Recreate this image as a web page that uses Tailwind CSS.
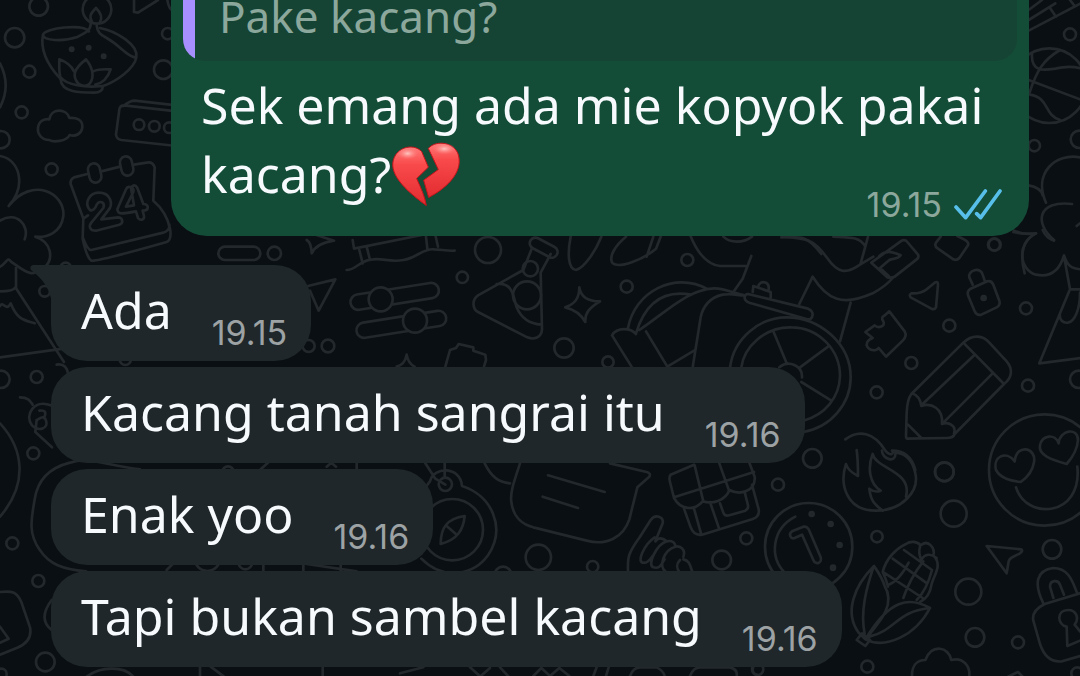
<!DOCTYPE html>
<html lang="id">
<head>
  <meta charset="UTF-8" />
  <meta name="viewport" content="width=device-width, initial-scale=1.0" />
  <title>Chat</title>
  <script src="https://cdn.jsdelivr.net/npm/@tailwindcss/browser@4"></script>
</head>
<body class="bg-[#0a0f13]">
  <div class="relative min-h-screen overflow-hidden font-['Noto_Sans',sans-serif] text-[50px] leading-[69px] text-[#f7fafc]">

    <!-- Wallpaper -->
    <svg class="absolute top-0 left-0 w-[1080px] h-[676px]" viewBox="0 0 3240 2028" fill="none" stroke="#22282c" stroke-width="8" stroke-linecap="round" stroke-linejoin="round" aria-hidden="true">
      <!-- lamp, cloud, box, calendar, flower -->
      <g>
        <circle cx="116" cy="19" r="28" /><circle cx="44" cy="113" r="29" /><circle cx="88" cy="215" r="18" />
        <circle cx="65" cy="337" r="18" /><circle cx="3" cy="419" r="26" /><circle cx="155" cy="508" r="18" />
        <circle cx="490" cy="209" r="28" /><circle cx="503" cy="101" r="17" /><circle cx="197" cy="805" r="17" />
        <circle cx="291" cy="28" r="43" />
        <path d="M288 24c-20 20-20 28-12 42M288 24c16 16 20 28 12 42M272 72c0 20-16 26-40 39-40 14-105 12-103-7 5-20 120-34 138-10M290 76c2 20 10 28 30 38 40 22 60 55 85 58M300 84c50 10 115 50 109 88-6 34-60 72-100 86M129 104c-10 50 15 92 52 132" />
        <path d="M182 236c-6-20-4-40-4-58 22 8 36 20 44 36M184 234c16 20 70 30 122 24M182 238c2 40 60 40 100 40 20 0 26-10 26-16M258 178c-36 28-44 50-22 74 14 8 26 6 34-2 14-20 8-48-12-72zM280 214c16-8 32-6 52-6-8 24-20 40-46 46" />
        <circle cx="215" cy="148" r="5" fill="#22282c" /><circle cx="266" cy="143" r="5" fill="#22282c" /><circle cx="311" cy="169" r="5" fill="#22282c" />
        <path d="M402 0v36l12 2 60-38M502 0q4 26 16 32M0 190q34 66 0 132" />
        <path d="M148 420c-28 0-36-24-34-36 2-22 20-28 34-26 4-34 52-34 60-4 20-2 40 4 39 27-2 20-20 30-38 24-10 20-50 22-61 15z" />
        <path d="M530 438l-166-18q-14-2-16-16l10-76q2-12 14-12l158 18M370 318q20-16 34-16l126 14" />
        <circle cx="417" cy="374" r="16" /><circle cx="463" cy="379" r="16" /><circle cx="508" cy="383" r="16" />
        <path d="M262 522l-40 10q-12 6-10 20l38 104-2 60q12 56 26 66 14 4 226-56 16-8 10-40-10-50-50-84l4-100q-6-18-24-14l-38 6M304 514l56-14M250 656l14-10M250 716q14 36 24 34l216-52q20-6 18-24" />
        <rect x="266" y="490" width="36" height="58" rx="18" transform="rotate(-12 284 519)" /><rect x="362" y="469" width="36" height="58" rx="18" transform="rotate(-12 380 498)" />
        <path d="M270 630c-20-22 0-52 26-52 36 0 46 34 28 54l-20 26 50-6c14 0 18 18 4 22l-70 18c-20 0-22-14-14-24l36-44c6-18-12-24-20-10-4 12-12 20-20 16zM378 568l-26 60c0 16 14 14 56 6l6 20c8 10 20 4 18-6l-4-16c20 0 20-20 2-20l-18-48c-8-14-20-6-18 6l8 46-24 4 22-44c4-14-16-22-22-8z" />
        <path d="M0 468c60 10 80 90 26 150 70-90 170-40 164 30-6 50-50 66-84 62 50 16 54 66 30 90-40 40-66 10-104-16-10-16-16 10-32 16M0 662c50-30 90 14 74 56" />
        <path d="M48 804v60M0 874q40 0 46-12l146 224M0 1072l190-26M0 918c10-18 18 20 32-8 20 50 40 50 72 60" />
        <rect x="655" y="740" width="126" height="40" rx="20" /><circle cx="823" cy="760" r="20" />
        <circle cx="134" cy="874" r="16" /><circle cx="3" cy="1138" r="26" /><circle cx="110" cy="1131" r="18" /><circle cx="100" cy="1360" r="18" />
        <path d="M170 1094c24-4 32 12 34 26M60 1192c24 0 30 10 38 22M152 1216c-50-20-80 30-56 60 20 20 50 10 42-14-4-16-14-10-24-4M118 1232q26-4 14 22M110 1260l-4 36 50 46M0 1270c70 76 86 180 0 280" />
        <path d="M450 1180l10-36M604 1180l-10-60" /><circle cx="376" cy="1078" r="17" />
      </g>
      <!-- bench, sliders, flask, sparkles -->
      <g transform="translate(900 690)">
        <path d="M20 30q14 8 15 40 14-30 66-38M40 12l62 20M24 168l82-20-50 94-26-60M158 30l4 26 248-50M178 60l10 40M200 50l10 40M378 20l4 36M406 14l8 36M140 120c30 0 40-32 80-32 30-4 50 10 90 2 40-6 60-36 92-32 20 0 40 6 62 4" />
        <circle cx="564" cy="60" r="39" /><circle cx="487" cy="142" r="17" /><circle cx="980" cy="170" r="18" /><circle cx="792" cy="354" r="29" />
        <circle cx="924" cy="396" r="17" /><circle cx="84" cy="348" r="19" /><circle cx="26" cy="348" r="18" />
        <rect x="150" y="176" width="268" height="46" rx="23" transform="rotate(-9 284 199)" fill="#0a0f13" /><circle cx="242" cy="208" r="36" fill="#0a0f13" />
        <rect x="168" y="260" width="272" height="46" rx="23" transform="rotate(-9 304 283)" fill="#0a0f13" /><circle cx="345" cy="272" r="36" fill="#0a0f13" />
        <path d="M696 54l-26 66-136 76c-20 14-16 42 0 50l148 76c20 8 42 2 44-24l-4-170 30-56M590 162c50-6 50 40 60 70 14 34 40 50 74 52" />
        <rect x="686" y="36" width="90" height="34" rx="17" transform="rotate(28 731 53)" /><circle cx="691" cy="116" r="23" /><circle cx="681" cy="196" r="42" />
        <path d="M838 172c4 26 20 42 62 42-30 18-46 34-44 62-12-22-28-36-60-44 28-10 42-26 42-60zM812 20c-10 50-8 98 16 100 26-6 60-60 76-100M978 20c-30 24-54 60-40 80 20 16 90-10 130-44l14-36M1060 20l-20 60" />
        <path d="M290 410q24-6 30-36 4 26 24 36M436 410l14-50 18-6 8-12 44 10v10l36 12 2 16-6 20" />
      </g>
      <!-- wheelbarrow, banner -->
      <g transform="translate(1800 690)">
        <circle cx="262" cy="90" r="18" />
        <path d="M270 14c20 50 50 90 90 94h76M454 78l-26 68-28 40M370 20c20 20 60 20 86 0M550 20c70 6 90 6 130 62 34 50 60 50 100 22l40-24M700 20c50 2 80 0 96 30l8-30M796 50l-14 50M598 222l40-82c44 70 90 90 180 50q40-22 60-46M752 218l-32 116" />
        <path d="M84 294c20-110 140-170 236-118M108 310c30-100 90-130 166-116M118 300c60-40 120-96 180-116 60-24 100 8 136 12M278 412l24-150c6-30 26-60 66-68 30-4 44 2 64 2M36 316c16-26 56-22 72-4M36 316l60 96M138 304l64 106 80-48" />
        <path d="M444 192l180 44q14 6 14 18-2 16-16 14l-174-50q-16-6-14-18 2-8 10-8zM458 186l2-18 52 18v18M474 172q4-20 24-14 10 6 8 20" />
        <path d="M390 414c10-90 90-152 170-152 100 0 192 80 192 180 0 80-60 150-142 164M424 412c8-60 70-122 150-120 80 0 146 66 146 146-2 64-44 116-110 134M520 304l40 96M600 412l84-62M604 456l90 56M538 412c28-24 70-4 68 30" />
      </g>
      <!-- letter, puzzle, padlock, pencil -->
      <g transform="translate(2460 690)">
        <path d="M154 98l88-64q12-8 20 2l32 38q4 8-4 14l-66 52q-12 4-22 2zM178 78c20-18 36-14 64-2-10 14-24 8-34 14l-28 24 26 24M362 20l-14 18q-6 10 6 18l46 32q10 4 18-4l26-38q4-10-12-18l-20-10" />
        <circle cx="522" cy="44" r="18" /><circle cx="618" cy="235" r="18" /><circle cx="388" cy="287" r="18" /><circle cx="274" cy="399" r="18" /><circle cx="170" cy="487" r="18" /><circle cx="624" cy="467" r="18" /><circle cx="776" cy="448" r="26" /><circle cx="373" cy="726" r="28" />
        <path d="M274 190c20 2 34-4 46-12l24-20q10-6 10 6l-6 68q-4 8-14 4l-62-34q-6-8 2-12z" />
        <path d="M458 164l-10-22c-6-20 34-34 40-8l6 18M452 176l50-22q12-4 18 10l18 48q4 14-8 20l-46 22q-14 4-20-10l-20-48q-4-12 8-20z" /><circle cx="491" cy="204" r="6" fill="#22282c" />
        <path d="M136 306l28-20c10 10 34 4 26-12-6-8-4-14 2-16l16-14 46 60q8 14-6 28l-50 48-22-26c-10 14-44 4-34-18 4-8 10-10 16-12z" />
        <path d="M430 338c30-28 60-20 78 0l52 56c20 24 16 50-8 68l-148 150q-4 12-24 12l-118 2q-4 0-4-8l2-70q2-40 14-56zM430 338l122 124M464 374l-160 152M518 430l-148 148M276 490q24 8 28 38c30-10 66 6 62 54 20-8 44 6 36 28M264 584l40 40" />
        <path d="M580 6q30 8 68 4c-60 30-50 110 0 124 40 8 70-10 84-58 10 30 20 40 50 42M668 0q10 24 34 32M732 78l18 100h32M748 182l-90 218 124-16M720 250c-4 20 10 30 24 28 20-4 36-40 36-90" />
        <path d="M76 628c40-30 86-22 120 34 20 24 28 0 20 0 40 0 60 20 70 58" />
        <path d="M740 702c-44-12-86-26-80-56 6-32 46-36 56-6 2-40 58-50 58-10-2 30-20 56-34 72z" />
      </g>
      <!-- ruler, ball, flower -->
      <g transform="translate(2280 0)">
        <path d="M806 30l40-30M806 92l160-84M870 24l18 26M930 0l14 18M806 60l80-50" />
        <circle cx="930" cy="103" r="18" /><circle cx="823" cy="437" r="17" /><circle cx="958" cy="418" r="26" /><circle cx="704" cy="734" r="18" />
        <circle cx="868" cy="257" r="112" />
        <path d="M816 160c-4 60 40 50 70 46 30-6 50-8 80 0M900 150c-50 30-70 60-92 130M806 240l154 58M810 284c60 10 40 60 90 76M806 556q36 6 42 30M858 608c-40-90 30-150 102-136M882 720c-60-50-50-120 54-108M762 692q30 14 66 8c-40 20-50 60-34 120M950 678l10-8M64 712c60-4 80-4 120 50" />
      </g>
      <!-- bottom left -->
      <g transform="translate(0 1350)">
        <circle cx="37" cy="280" r="18" /><circle cx="115" cy="393" r="18" /><circle cx="136" cy="636" r="28" /><circle cx="4" cy="672" r="16" /><circle cx="684" cy="66" r="17" /><circle cx="622" cy="325" r="38" /><circle cx="736" cy="338" r="20" />
        <path d="M420 58c-100-10-150-40-210-20-80 20-100 70-106 110-10 60-20 100 14 150 30 46 70 60 140 66M780 60l26-24M980 50l14-12 14 12M1070 40v30M500 360l24-24M790 340v30M910 340v30M920 342l150 22M1022 342v24M155 450c-30 40-26 70 0 90" />
        <path d="M0 426c40-4 50 0 64 30l26 76c6 30-10 50-40 62l-50 20M0 530l26 36-26 12M260 680c40-30 110-34 140 0M600 650v30M632 650l40 30M968 650v30" />
      </g>
      <!-- compass, speech bubble, hand, gift -->
      <g transform="translate(1200 1350)">
        <circle cx="157" cy="239" r="92" /><circle cx="136" cy="103" r="20" />
        <path d="M64 326c70 70 160 46 200-10 56-84 10-180-78-208-4-60-86-60-96-14l-20 26M76 40l30 46 30 18M134 40v40M122 282c0-50 20-76 72-84-4 40-20 70-72 84zM140 228l30 26" />
        <path d="M254 40c20 40 40 56 76 60M360 40c-20 60-30 90-26 116 6 46 30 66 66 76l160 40c60 16 110-10 128-64l24-96 36-32q6-10-8-14l-110-26M444 76l170 50M428 140l106 34" />
        <circle cx="415" cy="322" r="38" /><circle cx="578" cy="350" r="17" /><circle cx="309" cy="376" r="26" /><circle cx="1039" cy="265" r="18" /><circle cx="965" cy="330" r="28" />
        <path d="M684 370c-2-50 0-60 36-110l32-50c14-20 40-10 36 10l-22 54q14-18 34 0M764 262c-30 20-60 80-30 76 10 0 16-10 24-20M800 274c-30 10-60 70-40 78 20 6 24-10 34-24M826 290c-36 10-50 60-30 74M800 274c16-4 26 4 26 16M826 290c16-4 32 10 24 30M840 330c-14 14-10 26 0 40M850 328c20 4 20 20 28 40" />
        <path d="M812 74q-6 8-2 22l12 48c20 36 60 40 86 10 30 10 70-4 80-34 30 16 80 6 76-40l-16-42M812 74l70-30M822 142l240-76M884 46l26 108M958 40l30 84M852 176l20 56q10 26 34 22l150-46q24-8 20-30l-20-74M882 176l22 78M930 156l26 76M960 160l10 28q4 12 18 8l48-14q10-6 8-16l-10-40" />
        <path d="M0 670l70-18M210 652l34 30M270 654l-30 26M300 652l26 28M400 678l24-24 26 24 28-24 30 24M590 652l-10 26M626 652l-8 26M690 678q10-26 30-26h50q20 10 24 26M870 678q10-26 30-26h90q24 6 20 26M1060 650q-6 20 10 24" />
      </g>
      <!-- clock, fire, corn, smiley, lock -->
      <g transform="translate(2220 1350)">
        <circle cx="217" cy="25" r="28" /><circle cx="114" cy="104" r="18" /><circle cx="613" cy="65" r="28" /><circle cx="641" cy="191" r="39" /><circle cx="411" cy="260" r="17" /><circle cx="936" cy="298" r="28" /><circle cx="685" cy="425" r="39" /><circle cx="705" cy="562" r="28" /><circle cx="834" cy="577" r="18" /><circle cx="382" cy="650" r="18" /><circle cx="53" cy="658" r="17" /><circle cx="1012" cy="670" r="18" />
        <circle cx="206" cy="290" r="131" />
        <path d="M166 200c-70 36-80 120-30 170M156 244l34-14q10-2 16 8l36 84c6 18-16 24-22 8l-34-76-22 10c-12 4-20-12-8-20z" />
        <g fill="#22282c"><circle cx="215" cy="192" r="6" /><circle cx="272" cy="222" r="6" /><circle cx="299" cy="285" r="6" /><circle cx="279" cy="353" r="6" /></g>
        <path d="M350 0c4 30 4 50 4 78-20-10-32-22-36-36-20 60 0 140 90 140 80 0 130-60 118-112-8-40-30-60-60-62 4 34-40 20-40-6M398 12c-16 40-10 90 24 110-10 4-24 2-34-6 4 40 20 50 40 66M398 12c10 46 120 50 100 128" />
        <path d="M402 348c-60 60-90 140-46 200l20 20c50-60 90-106 58-160-8-26-18-40-32-60zM400 352c-20 60-40 130-26 200M376 568c60 30 150-10 194-94-60-34-120-30-194 94zM388 560c80-20 80-74 180-86M350 570l16-20 24 20-14 18z" />
        <path d="M428 366c10-40 40-70 70-84 14-10 34-8 44 4 24-20 44 10 38 30 30 30 0 60-6 90-4 26-14 40-34 50M428 366q10 20 16 44M458 326l100 72M492 300l84 60M540 290c-6 20 0 30 4 40 10-20 30-20 46-6M432 368l116 76M446 404q30-10 60-66M490 444q20-60 60-110M530 450q30-30 46-90" />
        <path d="M740 288l104 10q6 4-4 12c-20 10-32 14-34 24l-6 36zM516 676c0-30 16-46 40-46 20-50 70-40 78 0 36-10 56 20 54 46M804 680l30-14 14 14" />
        <circle cx="914" cy="60" r="167" />
        <path d="M824 34c6-56 66-40 58 2-4 30-20 46-40 60-30-4-60-10-74-36-10-40 30-60 56-26zM828 112c30 100 200 90 184-62" />
        <path d="M910 460c-30-60-20-100 30-106 50 0 60 50 72 76M940 444l-10-34c0-20 24-22 30-6l12 30M1020 430l-106 32q-40 20-34 50l20 70c10 30 30 56 66 52l54-16M982 588l-2-58c-30-6-30-50 4-50 26 0 34 26 20 44l16 20M982 588l38-16" />
      </g>
    </svg>

    <main class="relative flex flex-col px-[51px]">

      <!-- Outgoing -->
      <div class="self-end max-w-[858px] rounded-b-[36px] bg-[#144d37] px-3">
        <blockquote class="flex h-[61px] overflow-hidden rounded-b-[22px] bg-[#164434] text-[44px] leading-8 text-[#8ca89d]">
          <span class="w-3 bg-[#a78fff]"></span>
          <p class="pl-6">Pake kacang?</p>
        </blockquote>
        <div class="h-[175px] pt-[10px] pr-3 pl-[18px]">
          <p>Sek emang ada mie kopyok pakai kacang?<svg class="inline-block h-[67px] w-[70px] align-[-15px]" viewBox="80 425 210 200" role="img" aria-label="broken heart">
              <defs>
                <linearGradient id="heart" x1="0" y1="0" x2="0" y2="1">
                  <stop offset="0" stop-color="#ff7a78" /><stop offset=".3" stop-color="#f94a4b" /><stop offset="1" stop-color="#e22b30" />
                </linearGradient>
                <radialGradient id="shine">
                  <stop offset="0" stop-color="#ffd0cb" stop-opacity=".9" /><stop offset="1" stop-color="#ff8583" stop-opacity="0" />
                </radialGradient>
              </defs>
              <g fill="url(#heart)" stroke="#c3131b" stroke-width="3" stroke-linejoin="round">
                <path d="M172 456C150 434 112 440 94 466C68 508 100 556 186 618C182 592 170 566 157 537L192 503Z" />
                <path d="M192 447C210 424 262 424 280 460C300 512 254 562 193 594L178 542L222 510Z" />
              </g>
              <ellipse cx="130" cy="462" rx="32" ry="18" fill="url(#shine)" /><ellipse cx="240" cy="448" rx="34" ry="17" fill="url(#shine)" />
            </svg></p>
          <div class="-mt-6 flex items-center justify-end gap-3 pr-[3px] font-['Inter',sans-serif] text-[34px] leading-10 text-[#8ca89d]">
            <time>19.15</time>
            <svg class="h-8 w-12" viewBox="0 0 144 96" fill="none" stroke="#57bfea" stroke-width="11" stroke-linecap="round" stroke-linejoin="round" role="img" aria-label="read">
              <path d="M6 54L35 86L94 6M68 74L80 86L138 6" />
            </svg>
          </div>
        </div>
      </div>

      <!-- Incoming -->
      <div class="mt-[29px] flex flex-col items-start gap-[6px]">
        <div class="relative flex h-24 items-end gap-10 rounded-[36px] rounded-tl-none bg-[#1f272a] pr-6 pl-[30px]">
          <svg class="absolute top-0 -left-[21px] h-[40px] w-[22px]" viewBox="0 0 22 40" fill="#1f272a" aria-hidden="true"><path d="M3 0H22V40C21 25 13 14 1 5Q-1 1 3 0Z" /></svg>
          <p class="mb-4">Ada</p>
          <time class="mb-2 font-['Inter',sans-serif] text-[34px] leading-10 text-[#9da2a4]">19.15</time>
        </div>
        <div class="flex h-24 items-end gap-10 rounded-[36px] bg-[#1f272a] pr-6 pl-[30px]">
          <p class="mb-4">Kacang tanah sangrai itu</p>
          <time class="mb-2 font-['Inter',sans-serif] text-[34px] leading-10 text-[#9da2a4]">19.16</time>
        </div>
        <div class="flex h-24 items-end gap-10 rounded-[36px] bg-[#1f272a] pr-6 pl-[30px]">
          <p class="mb-4">Enak yoo</p>
          <time class="mb-2 font-['Inter',sans-serif] text-[34px] leading-10 text-[#9da2a4]">19.16</time>
        </div>
        <div class="flex h-24 items-end gap-10 rounded-[36px] bg-[#1f272a] pr-6 pl-[30px]">
          <p class="mb-4">Tapi bukan sambel kacang</p>
          <time class="mb-2 font-['Inter',sans-serif] text-[34px] leading-10 text-[#9da2a4]">19.16</time>
        </div>
      </div>
    </main>
  </div>
</body>
</html>
